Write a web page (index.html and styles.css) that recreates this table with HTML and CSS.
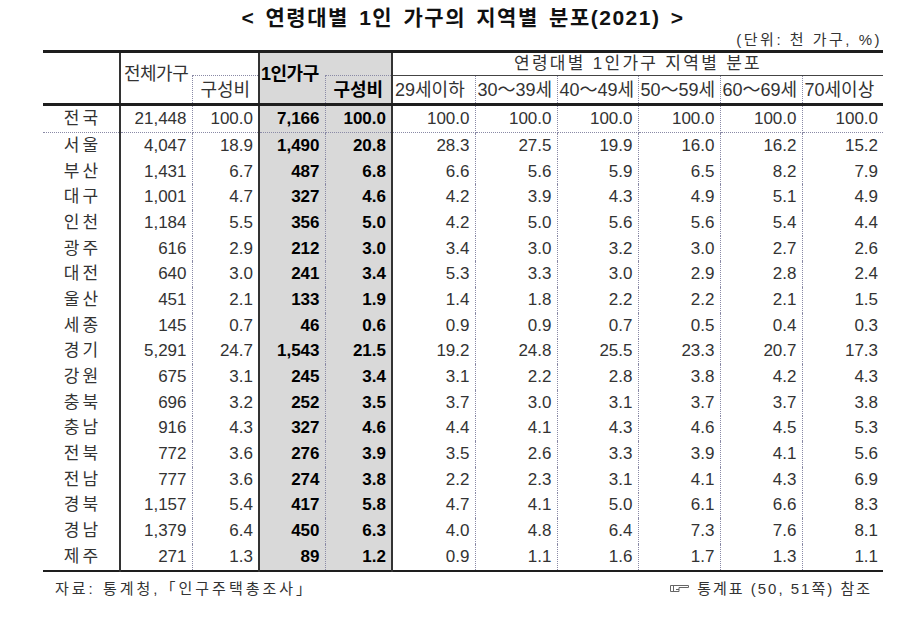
FILE: index.html
```html
<!DOCTYPE html>
<html lang="ko">
<head>
<meta charset="utf-8">
<link rel="stylesheet" href="styles.css">
</head>
<body>
<div class="page">
  <h1 class="title">&lt; 연령대별 1인 가구의 지역별 분포(2021) &gt;</h1>
  <div class="unit">(단위: 천 가구, %)</div>
  <table class="stats">
    <colgroup>
      <col class="c-rg"><col class="c-tot"><col class="c-pct"><col class="c-one"><col class="c-pct1">
      <col class="c-a1"><col class="c-a"><col class="c-a3"><col class="c-a"><col class="c-a"><col class="c-a3">
    </colgroup>
    <thead>
      <tr class="hr1">
        <th class="corner" rowspan="2"></th>
        <th class="tot" rowspan="2">전체가구</th>
        <th class="gap"></th>
        <th class="one hl" rowspan="2">1인가구</th>
        <th class="gap hl end"></th>
        <th class="agehead" colspan="6">연령대별 1인가구 지역별 분포</th>
      </tr>
      <tr class="hr2">
        <th class="sub">구성비</th>
        <th class="sub hl end bold">구성비</th>
        <th class="age">29세이하</th>
        <th class="age dl">30～39세</th>
        <th class="age dl">40～49세</th>
        <th class="age dl">50～59세</th>
        <th class="age dl">60～69세</th>
        <th class="age dl">70세이상</th>
      </tr>
    </thead>
    <tbody>
      <tr class="nat"><td class="rg">전국</td><td>21,448</td><td>100.0</td><td class="hl">7,166</td><td class="hl end">100.0</td><td>100.0</td><td>100.0</td><td>100.0</td><td>100.0</td><td>100.0</td><td>100.0</td></tr>
      <tr><td class="rg">서울</td><td>4,047</td><td>18.9</td><td class="hl">1,490</td><td class="hl end">20.8</td><td>28.3</td><td>27.5</td><td>19.9</td><td>16.0</td><td>16.2</td><td>15.2</td></tr>
      <tr><td class="rg">부산</td><td>1,431</td><td>6.7</td><td class="hl">487</td><td class="hl end">6.8</td><td>6.6</td><td>5.6</td><td>5.9</td><td>6.5</td><td>8.2</td><td>7.9</td></tr>
      <tr><td class="rg">대구</td><td>1,001</td><td>4.7</td><td class="hl">327</td><td class="hl end">4.6</td><td>4.2</td><td>3.9</td><td>4.3</td><td>4.9</td><td>5.1</td><td>4.9</td></tr>
      <tr><td class="rg">인천</td><td>1,184</td><td>5.5</td><td class="hl">356</td><td class="hl end">5.0</td><td>4.2</td><td>5.0</td><td>5.6</td><td>5.6</td><td>5.4</td><td>4.4</td></tr>
      <tr><td class="rg">광주</td><td>616</td><td>2.9</td><td class="hl">212</td><td class="hl end">3.0</td><td>3.4</td><td>3.0</td><td>3.2</td><td>3.0</td><td>2.7</td><td>2.6</td></tr>
      <tr><td class="rg">대전</td><td>640</td><td>3.0</td><td class="hl">241</td><td class="hl end">3.4</td><td>5.3</td><td>3.3</td><td>3.0</td><td>2.9</td><td>2.8</td><td>2.4</td></tr>
      <tr><td class="rg">울산</td><td>451</td><td>2.1</td><td class="hl">133</td><td class="hl end">1.9</td><td>1.4</td><td>1.8</td><td>2.2</td><td>2.2</td><td>2.1</td><td>1.5</td></tr>
      <tr><td class="rg">세종</td><td>145</td><td>0.7</td><td class="hl">46</td><td class="hl end">0.6</td><td>0.9</td><td>0.9</td><td>0.7</td><td>0.5</td><td>0.4</td><td>0.3</td></tr>
      <tr><td class="rg">경기</td><td>5,291</td><td>24.7</td><td class="hl">1,543</td><td class="hl end">21.5</td><td>19.2</td><td>24.8</td><td>25.5</td><td>23.3</td><td>20.7</td><td>17.3</td></tr>
      <tr><td class="rg">강원</td><td>675</td><td>3.1</td><td class="hl">245</td><td class="hl end">3.4</td><td>3.1</td><td>2.2</td><td>2.8</td><td>3.8</td><td>4.2</td><td>4.3</td></tr>
      <tr><td class="rg">충북</td><td>696</td><td>3.2</td><td class="hl">252</td><td class="hl end">3.5</td><td>3.7</td><td>3.0</td><td>3.1</td><td>3.7</td><td>3.7</td><td>3.8</td></tr>
      <tr><td class="rg">충남</td><td>916</td><td>4.3</td><td class="hl">327</td><td class="hl end">4.6</td><td>4.4</td><td>4.1</td><td>4.3</td><td>4.6</td><td>4.5</td><td>5.3</td></tr>
      <tr><td class="rg">전북</td><td>772</td><td>3.6</td><td class="hl">276</td><td class="hl end">3.9</td><td>3.5</td><td>2.6</td><td>3.3</td><td>3.9</td><td>4.1</td><td>5.6</td></tr>
      <tr><td class="rg">전남</td><td>777</td><td>3.6</td><td class="hl">274</td><td class="hl end">3.8</td><td>2.2</td><td>2.3</td><td>3.1</td><td>4.1</td><td>4.3</td><td>6.9</td></tr>
      <tr><td class="rg">경북</td><td>1,157</td><td>5.4</td><td class="hl">417</td><td class="hl end">5.8</td><td>4.7</td><td>4.1</td><td>5.0</td><td>6.1</td><td>6.6</td><td>8.3</td></tr>
      <tr><td class="rg">경남</td><td>1,379</td><td>6.4</td><td class="hl">450</td><td class="hl end">6.3</td><td>4.0</td><td>4.8</td><td>6.4</td><td>7.3</td><td>7.6</td><td>8.1</td></tr>
      <tr><td class="rg">제주</td><td>271</td><td>1.3</td><td class="hl">89</td><td class="hl end">1.2</td><td>0.9</td><td>1.1</td><td>1.6</td><td>1.7</td><td>1.3</td><td>1.1</td></tr>
    </tbody>
  </table>
  <div class="foot">
    <span class="src">자료: 통계청,「인구주택총조사」</span>
    <span class="ref"><svg class="hand" width="21" height="9" viewBox="0 0 21 9"><path d="M1.5 1.5 H19.5 V3.5 H10 V7.5 H1.5 Z M4.5 1.5 V7.5 M7 5.5 H10" fill="none" stroke="#666" stroke-width="1"/></svg> 통계표 (50, 51쪽) 참조</span>
  </div>
</div>
</body>
</html>
```
FILE: styles.css
```css
html, body {
  margin: 0;
  padding: 0;
  background: #fff;
}
body {
  font-family: "Liberation Sans", "Noto Sans CJK KR", sans-serif;
  color: #333;
}
.page {
  width: 900px;
  height: 618px;
}
.title {
  margin: 0 0 0 43px;
  width: 840px;
  padding-top: 6px;
  font-size: 21px;
  line-height: 24px;
  font-weight: bold;
  color: #111;
  text-align: center;
  letter-spacing: 1.5px;
  word-spacing: 3px;
}
.unit {
  margin-top: 2px;
  padding-right: 18px;
  text-align: right;
  font-size: 15px;
  line-height: 16px;
  letter-spacing: 2.5px;
  color: #333;
}
.stats {
  margin: 2px 0 0 43px;
  width: 840px;
  table-layout: fixed;
  border-collapse: collapse;
  border-top: 3px solid #1e1e1e;
  border-bottom: 2px solid #1e1e1e;
  font-size: 17px;
}
.c-rg { width: 77px; }
.c-tot { width: 72px; }
.c-pct { width: 67px; }
.c-one { width: 66px; }
.c-pct1 { width: 67px; }
.c-a1 { width: 83px; }
.c-a { width: 82px; }
.c-a3 { width: 81px; }

.stats th, .stats td {
  padding: 0 5px 0 0;
  line-height: 20px;
  white-space: nowrap;
  overflow: visible;
}
.stats th {
  font-weight: normal;
  font-size: 18px;
}
.hl {
  background: #d9d9d9;
}
.stats td.hl, .stats th.bold, .stats th.one {
  font-weight: bold;
  color: #000;
}

/* header */
.hr1 th { height: 22px; }
.hr2 th { height: 27px; border-bottom: 3px solid #1e1e1e; }
.corner {
  border-right: 2px solid #333;
  border-bottom: 3px solid #1e1e1e;
}
.tot {
  text-align: left;
  padding: 0 0 8px 3px !important;
  letter-spacing: -0.5px;
  border-bottom: 3px solid #1e1e1e;
}
.gap {
  border-bottom: 1px dotted #8a8aa6;
}
.one {
  text-align: left;
  padding: 0 0 8px 1px !important;
  letter-spacing: -0.5px;
  border-left: 2px solid #333;
  border-bottom: 3px solid #1e1e1e;
}
.end {
  border-right: 2px solid #333;
}
.agehead {
  font-size: 17px !important;
  letter-spacing: 2.3px;
  text-align: center;
  border-bottom: 1px solid #444;
  padding: 0 !important;
}
.sub {
  text-align: center;
  padding: 0 !important;
  border-left: 1px dotted #8a8aa6;
}
.age {
  text-align: left;
  padding: 0 0 0 2px !important;
  letter-spacing: 0;
}
.dl {
  border-left: 1px dotted #8a8aa6;
}

/* body */
.stats tbody td {
  height: 25.7px;
  text-align: right;
  border-right: 1px dotted #8a8aa6;
}
.stats tbody td:nth-child(1),
.stats tbody td:nth-child(3),
.stats tbody td:nth-child(5) {
  border-right: 2px solid #333;
}
.stats tbody td:last-child {
  border-right: none;
}
.stats tbody td.rg {
  text-align: center;
  font-size: 17px;
  letter-spacing: 3px;
  padding: 0 0 0 3px;
  color: #333;
}
.stats tbody tr.nat td {
  height: 26px;
  border-bottom: 1px dotted #8a8aa6;
}

/* footer */
.foot {
  margin: 8px 0 0 55px;
  width: 817px;
  display: flex;
  justify-content: space-between;
  align-items: center;
  font-size: 15px;
  line-height: 18px;
  color: #333;
}
.src {
  letter-spacing: 3px;
}
.ref {
  display: flex;
  align-items: center;
  gap: 7px;
  letter-spacing: 2px;
}
.hand {
  display: block;
}
```
